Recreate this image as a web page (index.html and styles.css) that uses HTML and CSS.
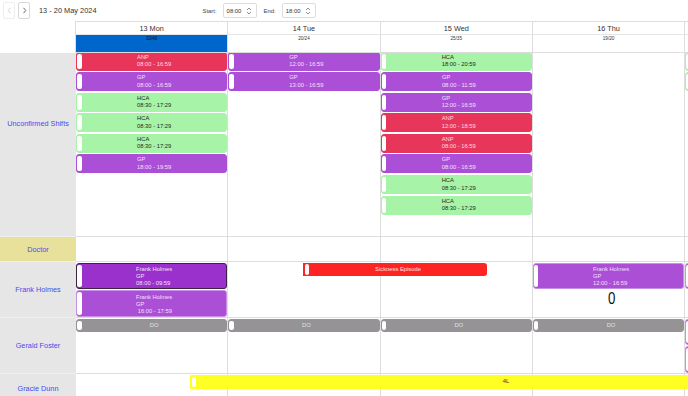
FILE: index.html
```html
<!DOCTYPE html>
<html lang="en">
<head>
	<meta charset="UTF-8">
	<title>roster</title>
	<link rel="stylesheet" href="styles.css">
</head>
<body>
	<div class="toolbar">
		<button class="nav" disabled><svg width="5" height="7" viewBox="0 0 5 7"><polyline points="3.5,0.8 1.2,3.5 3.5,6.2" fill="none" stroke="currentColor" stroke-width="0.9"/></svg></button>
		<button class="nav"><svg width="5" height="7" viewBox="0 0 5 7"><polyline points="1.5,0.8 3.8,3.5 1.5,6.2" fill="none" stroke="currentColor" stroke-width="0.9"/></svg></button>
		<span class="range">13 - 20 May 2024</span>
		<span class="time-label start">Start:</span>
		<div class="time-input"><span>08:00</span><svg class="spin" width="6" height="8" viewBox="0 0 6 8"><polyline points="1,3 3,1 5,3" fill="none" stroke="#777" stroke-width="0.8"/><polyline points="1,5 3,7 5,5" fill="none" stroke="#777" stroke-width="0.8"/></svg></div>
		<span class="time-label end">End:</span>
		<div class="time-input"><span>18:00</span><svg class="spin" width="6" height="8" viewBox="0 0 6 8"><polyline points="1,3 3,1 5,3" fill="none" stroke="#777" stroke-width="0.8"/><polyline points="1,5 3,7 5,5" fill="none" stroke="#777" stroke-width="0.8"/></svg></div>
	</div>

	<div class="scheduler">
		<div class="row head">
			<div class="corner"></div>
			<div class="day first"><div class="day-name">13 Mon</div><div class="day-count full">32/40</div></div>
			<div class="day"><div class="day-name">14 Tue</div><div class="day-count">20/24</div></div>
			<div class="day"><div class="day-name">15 Wed</div><div class="day-count">25/35</div></div>
			<div class="day"><div class="day-name">16 Thu</div><div class="day-count">19/20</div></div>
			<div class="day"><div class="day-name"></div><div class="day-count"></div></div>
		</div>

		<div class="row section unconfirmed">
			<div class="res">Unconfirmed Shifts</div>
			<div class="cell">
				<div class="ev anp"><div class="txt">ANP<br>08:00 - 16:59</div></div>
				<div class="ev gp"><div class="txt">GP<br>08:00 - 16:59</div></div>
				<div class="ev hca"><div class="txt">HCA<br>08:30 - 17:29</div></div>
				<div class="ev hca"><div class="txt">HCA<br>08:30 - 17:29</div></div>
				<div class="ev hca"><div class="txt">HCA<br>08:30 - 17:29</div></div>
				<div class="ev gp"><div class="txt">GP<br>18:00 - 19:59</div></div>
			</div>
			<div class="cell">
				<div class="ev gp"><div class="txt">GP<br>12:00 - 16:59</div></div>
				<div class="ev gp"><div class="txt">GP<br>13:00 - 16:59</div></div>
			</div>
			<div class="cell">
				<div class="ev hca"><div class="txt">HCA<br>18:00 - 20:59</div></div>
				<div class="ev gp"><div class="txt">GP<br>08:00 - 11:59</div></div>
				<div class="ev gp"><div class="txt">GP<br>12:00 - 16:59</div></div>
				<div class="ev anp"><div class="txt">ANP<br>12:00 - 18:59</div></div>
				<div class="ev anp"><div class="txt">ANP<br>08:00 - 16:59</div></div>
				<div class="ev gp"><div class="txt">GP<br>08:00 - 16:59</div></div>
				<div class="ev hca"><div class="txt">HCA<br>08:30 - 17:29</div></div>
				<div class="ev hca"><div class="txt">HCA<br>08:30 - 17:29</div></div>
			</div>
			<div class="cell"></div>
			<div class="cell">
				<div class="ev hca"></div>
				<div class="ev hca"></div>
			</div>
		</div>

		<div class="row section doctor">
			<div class="res">Doctor</div>
			<div class="cell"></div>
			<div class="cell"></div>
			<div class="cell"></div>
			<div class="cell"></div>
			<div class="cell"></div>
		</div>

		<div class="row section person">
			<div class="res">Frank Holmes</div>
			<div class="cell">
				<div class="ev gp tall selected"><div class="txt">Frank Holmes<br>GP<br>08:00 - 09:59</div></div>
				<div class="ev gp tall soft"><div class="txt">Frank Holmes<br>GP<br>&nbsp;16:00 - 17:59</div></div>
			</div>
			<div class="cell"></div>
			<div class="cell"></div>
			<div class="cell">
				<div class="ev gp tall soft"><div class="txt">Frank Holmes<br>GP<br>12:00 - 16:59</div></div>
				<div class="count"><span>0</span></div>
			</div>
			<div class="cell">
				<div class="ev gp tall soft"></div>
			</div>
			<div class="bar sick" style="left:303px;width:184px"><div class="txt">Sickness Episode</div></div>
		</div>

		<div class="row section person">
			<div class="res">Gerald Foster</div>
			<div class="cell"><div class="ev off"><div class="txt">DO</div></div></div>
			<div class="cell"><div class="ev off"><div class="txt">DO</div></div></div>
			<div class="cell"><div class="ev off"><div class="txt">DO</div></div></div>
			<div class="cell"><div class="ev off"><div class="txt">DO</div></div></div>
			<div class="cell">
				<div class="ev gp tall soft"></div>
				<div class="ev gp tall soft"></div>
			</div>
		</div>

		<div class="row section person last">
			<div class="res">Gracie Dunn</div>
			<div class="cell"></div>
			<div class="cell"></div>
			<div class="cell"></div>
			<div class="cell"></div>
			<div class="cell"></div>
			<div class="bar leave" style="left:190px;width:626px"><div class="txt">4L</div></div>
		</div>
	</div>
</body>
</html>
```

FILE: styles.css
```css
*{box-sizing: border-box;}
body{
	margin: 0;
	font-family: "Liberation Sans", Arial, sans-serif;
	color: #333;
	background: #fff;
	overflow: hidden;
}

/* toolbar */
.toolbar{
	display: flex;
	align-items: center;
	height: 21px;
	padding-left: 3px;
}
.nav{
	display: flex;
	align-items: center;
	justify-content: center;
	width: 12px;
	height: 17px;
	padding: 0;
	margin-right: 3px;
	border: 1px solid #d8d8d8;
	border-radius: 2px;
	background: #fff;
	color: #555;
}
.nav:disabled{
	color: #ccc;
	border-color: #eee;
}
.range{
	font-size: 7.4px;
	margin-left: 6px;
	color: #333;
}
.time-label{
	font-size: 5.9px;
	color: #444;
	margin-right: 6px;
}
.start{margin-left: 106px;}
.end{margin-left: 7px;}
.time-input{
	display: flex;
	align-items: center;
	justify-content: space-between;
	width: 34px;
	height: 15px;
	padding: 0 4px 0 3px;
	border: 1px solid #ddd;
	border-radius: 2px;
	font-size: 5.9px;
	color: #333;
}

/* scheduler grid */
.scheduler{
	width: 688px;
	overflow: hidden;
}
.row{
	display: grid;
	grid-template-columns: 76px repeat(5, 152.3px);
}
.day{
	border-top: 1px solid #ddd;
	border-right: 1px solid #ddd;
	border-bottom: 1px solid #ddd;
}
.day.first{border-left: 1px solid #ddd;margin-left: -1px;}
.day-name{
	height: 13px;
	line-height: 13px;
	text-align: center;
	font-size: 7.3px;
	color: #333;
	border-bottom: 1px solid #e6e6e6;
}
.day-count{
	height: 17px;
	padding-top: 1px;
	line-height: 6px;
	text-align: center;
	font-size: 4.6px;
	color: #333;
}
.day-count.full{
	background: #0066cc;
	color: #111;
}

.section{position: relative;}
.unconfirmed{height: 184px;}
.doctor{height: 25px;}
.person{height: 56px;}
.res{
	display: flex;
	justify-content: center;
	align-items: center;
	background: #e6e6e6;
	color: #4a4af0;
	font-size: 7.3px;
	border-bottom: 1px solid #efefef;
}
.unconfirmed .res{align-items: flex-start;padding-top: 66px;}
.doctor .res{background: #e8e19b;}
.last .res{align-items: flex-start;padding-top: 10px;}
.cell{
	display: flex;
	flex-direction: column;
	gap: 1.6px;
	overflow: hidden;
	border-right: 1px solid #ddd;
	border-bottom: 1px solid #ddd;
}
.person .cell{gap: 1.2px;padding-top: 0.7px;}
.unconfirmed .cell .ev:first-child{margin-top: -1.5px;}

/* events */
.ev{
	position: relative;
	flex: none;
	display: flex;
	justify-content: center;
	height: 19px;
	padding: 1px 0 0 5px;
	border: 1px solid;
	border-radius: 3px;
	font-size: 5.8px;
	line-height: 7.6px;
}
.ev::before,
.bar::before{
	content: "";
	position: absolute;
	left: 0;
	top: 1px;
	bottom: 1px;
	width: 4.5px;
	background: #fff;
	border-radius: 2px;
}
.txt{text-align: left;white-space: nowrap;}
.anp{background: #e8355a;border-color: #e8355a;color: #fbdde4;}
.gp{background: #ab4fd6;border-color: #ab4fd6;color: #f3e0f8;}
.hca{background: #a7f3a7;border-color: #a7f3a7;color: #1e2a1e;}
.tall{
	height: 26.5px;
	padding-top: 2.5px;
	line-height: 6.9px;
}
.selected{background: #9b31cc;border-color: #3c2343;}
.soft{border-color: #c98ee6;}
.off{
	height: 13px;
	padding-top: 0;
	line-height: 11px;
	background: #959395;
	border-color: #959395;
	color: #e2e2e2;
}
.count{
	padding-left: 6px;
	margin-top: 0.5px;
	text-align: center;
	font-size: 17px;
	line-height: 15px;
	color: #111;
}
.count span{
	display: inline-block;
	transform: scaleX(0.78);
}

/* bars spanning days, placed by time */
.bar{
	position: absolute;
	top: 0.7px;
	height: 13px;
	display: flex;
	justify-content: center;
	padding-left: 6px;
	border-radius: 0 3px 3px 0;
	font-size: 5.8px;
	line-height: 13px;
}
.bar::before{left: 2px;width: 4px;}
.sick{background: #ff2424;color: #ffe4e4;}
.leave{top: 1.3px;height: 13.3px;background: #ffff24;color: #333;border-radius: 0;}
.leave::before{top: 2px;bottom: 2px;}
```
